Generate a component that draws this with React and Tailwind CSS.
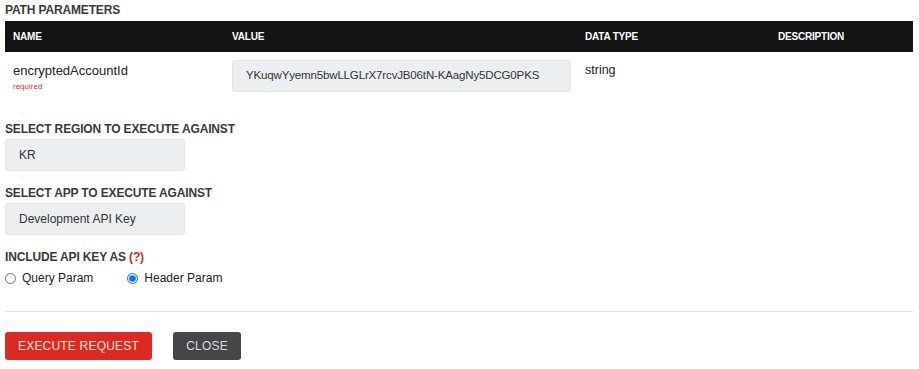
import React, { useState } from 'react'

const Heading = ({ children }) => (
  <h3 className="text-[12px] font-bold uppercase text-[#3a3a3a] leading-none tracking-[-0.15px]">{children}</h3>
)

const Box = ({ children, className = '' }) => (
  <div className={`h-[32px] flex items-center px-[13px] bg-[#eceff1] border border-[#e2e5e8] rounded-[3px] text-[12px] text-[#333] whitespace-nowrap overflow-hidden ${className}`}>
    {children}
  </div>
)

const App = () => {
  const [keyAs, setKeyAs] = useState('header')

  return (
    <div className="w-[919px] h-[369px] bg-white px-[5px] pt-[4px]" style={{ fontFamily: '"Liberation Sans", Arial, sans-serif' }}>
      <Heading>Path Parameters</Heading>

      {/* Params table */}
      <div className="mt-[5px] w-[908px]">
        <div className="h-[31px] bg-[#141414] grid grid-cols-[227px_353px_193px_1fr] items-center text-[10px] font-bold text-white uppercase tracking-[-0.2px]">
          <div className="pl-[8px]">Name</div>
          <div>Value</div>
          <div>Data Type</div>
          <div>Description</div>
        </div>
        <div className="grid grid-cols-[227px_353px_193px_1fr] pt-[8px]">
          <div className="pl-[8px] pt-[4px]">
            <div className="text-[13px] text-[#222] leading-none">encryptedAccountId</div>
            <div className="text-[8px] text-[#e0262c] mt-[4px]">required</div>
          </div>
          <div>
            <Box className="w-[339px] !text-[11.5px] tracking-[-0.15px]">YKuqwYyemn5bwLLGLrX7rcvJB06tN-KAagNy5DCG0PKS</Box>
          </div>
          <div className="text-[12.5px] text-[#222] pt-[4px] leading-none">string</div>
          <div></div>
        </div>
      </div>

      <div className="mt-[30px]">
        <Heading>Select region to execute against</Heading>
        <Box className="w-[180px] mt-[4px]">KR</Box>
      </div>

      <div className="mt-[16px]">
        <Heading>Select app to execute against</Heading>
        <Box className="w-[180px] mt-[4px]">Development API Key</Box>
      </div>

      <div className="mt-[16px]">
        <Heading>
          Include API key as <span className="text-[#d0252a]">(?)</span>
        </Heading>
        <div className="flex items-center mt-[6px] text-[12px] text-[#222]">
          <label className="flex items-center gap-[6px] mr-[34px]">
            <input
              type="radio"
              name="keyAs"
              checked={keyAs === 'query'}
              onChange={() => setKeyAs('query')}
              className="m-0 w-[11px] h-[11px]"
            />
            Query Param
          </label>
          <label className="flex items-center gap-[6px]">
            <input
              type="radio"
              name="keyAs"
              checked={keyAs === 'header'}
              onChange={() => setKeyAs('header')}
              className="m-0 w-[11px] h-[11px]"
            />
            Header Param
          </label>
        </div>
      </div>

      <hr className="mt-[24px] w-[908px] border-0 border-t border-[#e3e3e3]" />

      <div className="flex gap-[21px] mt-[20px]">
        <button className="h-[28px] w-[147px] bg-[#dc2a22] text-[#fbe3df] rounded-[3px] text-[12px] uppercase tracking-[0.2px]">
          Execute Request
        </button>
        <button className="h-[28px] w-[68px] bg-[#464646] text-[#d5dbe0] rounded-[3px] text-[12px] uppercase tracking-[0.2px]">
          Close
        </button>
      </div>
    </div>
  )
}

export default App
